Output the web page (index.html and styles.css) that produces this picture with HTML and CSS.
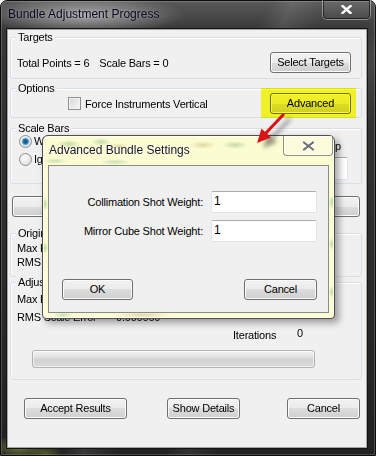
FILE: index.html
```html
<!DOCTYPE html>
<html>
<head>
<meta charset="utf-8">
<title>Bundle Adjustment Progress</title>
<link rel="stylesheet" href="styles.css">
</head>
<body>
<div class="window">
  <div class="titlebar">
    <span class="title">Bundle Adjustment Progress</span>
    <span class="close"><svg width="11" height="9" viewBox="0 0 11 9"><path d="M1.5 1 L9.5 8 M9.5 1 L1.5 8" stroke="#fff" stroke-width="2.4" stroke-linecap="square"/></svg></span>
  </div>
  <div class="client">
    <div class="group g-targets">
      <div class="legend">Targets</div>
      <div class="row-targets">
        <span class="info">Total Points = 6<span class="gap"></span>Scale Bars = 0</span>
        <button class="btn btn-w80">Select Targets</button>
      </div>
    </div>

    <div class="group g-options">
      <div class="legend">Options</div>
      <div class="row-options">
        <label class="check"><span class="cbox"></span>Force Instruments Vertical</label>
        <div class="hl">
          <button class="btn btn-w80">Advanced</button>
          <span class="highlight"></span>
        </div>
      </div>
    </div>

    <div class="group g-scale">
      <div class="legend">Scale Bars</div>
      <div class="row-scale">
        <div class="radios">
          <label class="radio-row"><span class="radio checked"></span>Weight Scale Bars</label>
          <label class="radio-row"><span class="radio"></span>Ignore Scale Bars</label>
        </div>
        <div class="scale-right">
          <span class="scale-label">Scale Bar Group</span>
          <span class="textbox"></span>
        </div>
      </div>
    </div>

    <button class="btn btn-wide">Run Bundle Adjustment</button>

    <div class="group g-orig">
      <div class="legend">Original</div>
      <div class="line l-first">Max Error</div>
      <div class="line l-second">RMS Error</div>
    </div>

    <div class="group g-adj">
      <div class="legend">Adjusted</div>
      <div class="line l-max">Max Error</div>
      <div class="line l-rms"><span class="lbl">RMS Scale Error</span><span class="val">0.000000</span></div>
      <div class="line l-iter"><span class="iter-lbl">Iterations</span><span class="iter-val">0</span></div>
      <div class="progress"></div>
    </div>

    <div class="bottom-buttons">
      <button class="btn btn-accept">Accept Results</button>
      <button class="btn btn-details">Show Details</button>
      <button class="btn btn-cancel">Cancel</button>
    </div>
  </div>
</div>

<div class="dialog">
  <div class="dlg-titlebar">
    <span class="dlg-title">Advanced Bundle Settings</span>
    <span class="dlg-close"><svg width="13" height="10" viewBox="0 0 13 10"><path d="M2 1.5 L11 8.5 M11 1.5 L2 8.5" stroke="#fff" stroke-width="4" stroke-linecap="square"/><path d="M2 1.5 L11 8.5 M11 1.5 L2 8.5" stroke="#6f6f6f" stroke-width="2" stroke-linecap="square"/></svg></span>
  </div>
  <div class="dlg-client">
    <div class="form">
      <span class="form-label">Collimation Shot Weight:</span>
      <span class="input">1</span>
      <span class="form-label">Mirror Cube Shot Weight:</span>
      <span class="input">1</span>
    </div>
    <div class="dlg-buttons">
      <button class="btn btn-ok">OK</button>
      <button class="btn btn-dcancel">Cancel</button>
    </div>
  </div>
</div>

<svg class="arrow" width="376" height="456" viewBox="0 0 376 456">
  <line x1="283" y1="115" x2="265" y2="134" stroke="#d91414" stroke-width="3.2" stroke-linecap="round"/>
  <polygon points="257,143 271,137.5 261.5,128.5" fill="#d91414"/>
</svg>
</body>
</html>
```

FILE: styles.css
```css
* { box-sizing: border-box; margin: 0; padding: 0; }

html, body {
  width: 376px;
  height: 456px;
  overflow: hidden;
  background: #ffffff;
}

body {
  position: relative;
  font-family: "Liberation Sans", Arial, sans-serif;
  font-size: 11px;
  letter-spacing: -0.2px;
  color: #000;
}

/* ---------- main window frame ---------- */
.window {
  width: 376px;
  height: 456px;
  border: 1px solid #0c0c0c;
  border-radius: 7px 7px 0 0;
  display: flex;
  flex-direction: column;
  background:
    radial-gradient(ellipse 100px 20px at 84px 14px, rgba(185,185,185,.85), rgba(185,185,185,0) 100%),
    radial-gradient(ellipse 26px 12px at 18px 446px, rgba(120,130,60,.9), rgba(120,130,60,0) 100%),
    radial-gradient(ellipse 18px 8px at 44px 452px, rgba(95,105,45,.8), rgba(95,105,45,0) 100%),
    linear-gradient(115deg, transparent 0 46%, rgba(255,255,255,.10) 50%, transparent 56%, transparent 64%, rgba(255,255,255,.08) 68%, transparent 73%),
    linear-gradient(#595959, #373737 30px, #2b2b2b 60%, #222 100%);
  box-shadow: inset 0 0 0 1px rgba(255,255,255,.18);
}

.titlebar {
  height: 28px;
  display: flex;
  justify-content: space-between;
  align-items: flex-start;
  padding: 0 4px 0 7px;
}

.title {
  font-size: 12px;
  letter-spacing: 0;
  line-height: 26px;
  color: #0a0a22;
  text-shadow: 0 0 3px rgba(255,255,255,.3);
}

.close {
  width: 49px;
  height: 20px;
  margin-top: -1px;
  border: 1px solid rgba(255,255,255,.35);
  border-top: 0;
  border-radius: 0 0 5px 5px;
  box-shadow: inset 0 0 0 1px rgba(0,0,0,.55);
  background: linear-gradient(rgba(255,255,255,.10), rgba(255,255,255,.03));
  display: flex;
  align-items: center;
  justify-content: center;
}

.client {
  margin: 0 8px 0 6px;
  height: 419px;
  border: 1px solid #a5a5a5;
  box-shadow: 0 0 0 1px #141414;
  background: #f0f0f0;
  padding: 0 4px 0 2px;
  display: flex;
  flex-direction: column;
}

/* ---------- group boxes ---------- */
.group {
  border: 1px solid #d5dfe5;
  border-radius: 3px;
  box-shadow: inset 1px 1px 0 #fff;
}

.legend {
  width: max-content;
  height: 13px;
  line-height: 13px;
  margin: -7px 0 0 5px;
  padding: 0 2px;
  background: #f0f0f0;
}

.g-targets { margin-top: 7px; padding-bottom: 5px; }
.row-targets {
  height: 21px;
  margin-top: 8px;
  padding: 0 10px 0 6px;
  display: flex;
  align-items: center;
  justify-content: space-between;
}
.gap { display: inline-block; width: 10px; }

.g-options { margin-top: 9px; padding-bottom: 3px; }
.row-options {
  height: 21px;
  margin-top: -2px;
  padding: 0 10px 0 57px;
  display: flex;
  align-items: center;
  justify-content: space-between;
}

.check { display: flex; align-items: center; gap: 4px; }
.cbox {
  width: 13px;
  height: 13px;
  border: 1px solid #8e8f8f;
  background: linear-gradient(135deg, #d6d6d6, #f9f9f9);
  box-shadow: inset 0 0 0 1px #f4f4f4;
}

.hl { position: relative; display: flex; }
.highlight {
  position: absolute;
  left: -9px;
  right: -5px;
  top: -5px;
  bottom: -4px;
  background: #ffff2a;
  mix-blend-mode: multiply;
  filter: blur(0.7px);
}

.g-scale { margin-top: 10px; padding-bottom: 3px; }
.row-scale { display: flex; justify-content: space-between; }
.radios { margin-top: -3px; padding-left: 8px; }
.radio-row { height: 18px; display: flex; align-items: center; gap: 2px; }
.radio {
  width: 13px;
  height: 13px;
  border-radius: 50%;
  border: 1px solid #8e8f8f;
  background: radial-gradient(circle at 40% 35%, #ffffff, #dcdcdc 80%);
}
.radio.checked {
  background:
    radial-gradient(circle at 50% 50%, #1d5e93 0 1.8px, #3d8fc8 2.6px, #8cc6ee 3.6px, rgba(140,198,238,0) 4.2px),
    radial-gradient(circle at 40% 35%, #ffffff, #dcdcdc 80%);
}
.scale-right {
  display: flex;
  flex-direction: column;
  align-items: flex-end;
  padding-right: 13px;
}
.scale-label { margin-top: 5px; margin-right: 7px; line-height: 13px; }
.textbox {
  width: 60px;
  height: 23px;
  margin-top: 4px;
  background: #fff;
  border: 1px solid #e2e3ea;
  border-top-color: #abadb3;
  border-radius: 2px;
}

/* ---------- buttons ---------- */
.btn {
  height: 21px;
  border: 1px solid #707070;
  border-radius: 3px;
  background: linear-gradient(#f2f2f2 0, #ebebeb 50%, #dddddd 50%, #cfcfcf 100%);
  box-shadow: inset 0 0 0 1px #fbfbfb;
  font: inherit;
  letter-spacing: inherit;
  color: #000;
  line-height: 19px;
  text-align: center;
}
.btn-w80 { width: 81px; }
.btn-wide { margin: 12px 2px 0; }

.g-orig { margin-top: 16px; padding-bottom: 7px; }
.line { line-height: 13px; height: 13px; padding-left: 6px; display: flex; }
.l-first { margin-top: 2px; }
.l-second { margin-top: 1px; }

.g-adj { margin-top: 5px; padding-bottom: 11px; }
.l-max { margin-top: 4px; }
.l-rms { margin-top: 5px; }
.l-rms .lbl { width: 99px; }
.l-iter { margin-top: 5px; padding-left: 222px; align-items: flex-start; }
.iter-lbl { width: 64px; }
.iter-val { margin-top: -2px; }

.progress {
  width: 283px;
  height: 18px;
  margin: 8px 0 0 21px;
  border: 1px solid #b2b2b2;
  border-radius: 3px;
  background: linear-gradient(#f4f4f4, #e2e2e2 35%, #d2d2d2 55%, #dcdcdc);
  box-shadow: inset 0 0 0 1px rgba(255,255,255,.6);
}

.bottom-buttons {
  display: flex;
  margin-top: 18px;
  padding: 0 2px 0 14px;
}
.btn-accept { width: 103px; }
.btn-details { width: 73px; margin-left: 40px; }
.btn-cancel { width: 73px; margin-left: auto; }

/* ---------- child dialog ---------- */
.dialog {
  position: absolute;
  left: 42px;
  top: 135px;
  width: 293px;
  height: 184px;
  border: 1px solid #4f4f4f;
  border-radius: 6px 6px 4px 4px;
  display: flex;
  flex-direction: column;
  z-index: 2;
  background:
    radial-gradient(ellipse 12px 4px at 26px 8px, rgba(150,190,130,.55), rgba(150,190,130,0)),
    radial-gradient(ellipse 10px 4px at 58px 6px, rgba(150,195,140,.55), rgba(150,195,140,0)),
    radial-gradient(ellipse 9px 3px at 76px 10px, rgba(200,190,120,.55), rgba(200,190,120,0)),
    radial-gradient(ellipse 13px 4px at 160px 9px, rgba(205,190,120,.6), rgba(205,190,120,0)),
    radial-gradient(ellipse 13px 4px at 192px 9px, rgba(150,190,130,.55), rgba(150,190,130,0)),
    radial-gradient(ellipse 12px 3px at 12px 25px, rgba(150,195,140,.5), rgba(150,195,140,0)),
    radial-gradient(ellipse 16px 3px at 72px 26px, rgba(150,195,140,.5), rgba(150,195,140,0)),
    radial-gradient(ellipse 3px 7px at 2px 68px, rgba(140,190,120,.6), rgba(140,190,120,0)),
    radial-gradient(ellipse 3px 6px at 2px 112px, rgba(140,190,120,.6), rgba(140,190,120,0)),
    radial-gradient(ellipse 3px 7px at 289px 66px, rgba(140,190,120,.6), rgba(140,190,120,0)),
    radial-gradient(ellipse 3px 6px at 289px 108px, rgba(140,190,120,.6), rgba(140,190,120,0)),
    radial-gradient(ellipse 3px 6px at 289px 156px, rgba(140,190,120,.6), rgba(140,190,120,0)),
    radial-gradient(ellipse 28px 3px at 100px 179px, rgba(200,195,140,.6), rgba(200,195,140,0)),
    radial-gradient(ellipse 10px 3px at 20px 179px, rgba(150,195,140,.5), rgba(150,195,140,0)),
    #fcfcd3;
  box-shadow: 4px 4px 7px rgba(0,0,0,.35), inset 0 0 0 1px rgba(255,255,255,.8);
}

.dlg-titlebar {
  height: 29px;
  display: flex;
  justify-content: space-between;
  align-items: flex-start;
  padding: 0 1px 0 6px;
}

.dlg-title {
  font-size: 12px;
  letter-spacing: 0;
  line-height: 29px;
  color: #15153e;
}

.dlg-close {
  width: 50px;
  height: 20px;
  border: 1px solid rgba(90,90,90,.65);
  border-top: 0;
  border-radius: 0 0 4px 4px;
  box-shadow: inset 0 0 0 1px rgba(255,255,255,.6);
  background: rgba(255,255,255,.22);
  display: flex;
  align-items: center;
  justify-content: center;
}

.dlg-client {
  flex: 1;
  margin: 0 5px 5px;
  border: 1px solid #8c8c8c;
  background: #f0f0f0;
  display: flex;
  flex-direction: column;
}

.form {
  display: grid;
  grid-template-columns: 1fr 106px;
  column-gap: 8px;
  row-gap: 7px;
  margin-top: 25px;
  padding-right: 11px;
}

.form-label { align-self: center; text-align: right; line-height: 13px; }

.input {
  height: 22px;
  background: #fff;
  border: 1px solid #e2e3ea;
  border-top-color: #abadb3;
  border-radius: 2px;
  font-size: 12px;
  letter-spacing: 0;
  line-height: 18px;
  padding-left: 2px;
}

.dlg-buttons {
  display: flex;
  justify-content: space-between;
  margin-top: 37px;
  padding: 0 11px 0 13px;
}
.btn-ok { width: 71px; }
.btn-dcancel { width: 73px; }

/* ---------- annotation arrow ---------- */
.arrow {
  position: absolute;
  left: 0;
  top: 0;
  z-index: 3;
  pointer-events: none;
  filter: drop-shadow(6px 5px 2px rgba(0,0,0,.4));
}
```
